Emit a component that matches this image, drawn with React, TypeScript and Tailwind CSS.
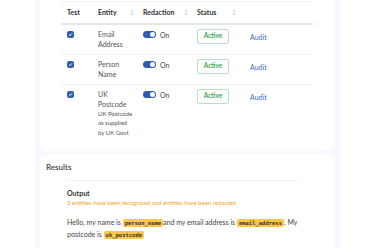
const rows = [
  { entity: ['Email', 'Address'], note: null },
  { entity: ['Person', 'Name'], note: null },
  { entity: ['UK', 'Postcode'], note: ['UK Postcode', 'as supplied', 'by UK Govt'] },
]

function SortIcon() {
  return (
    <svg width="4" height="7" viewBox="0 0 4 7" className="shrink-0">
      <path d="M2 0.5 L3.6 2.8 H0.4 Z" fill="#cfd3d8" />
      <path d="M2 6.5 L3.6 4.2 H0.4 Z" fill="#cfd3d8" />
    </svg>
  )
}

function Checkbox() {
  return (
    <div className="w-[7px] h-[7px] rounded-[2px] bg-[#2f5fae] flex items-center justify-center">
      <svg width="5" height="5" viewBox="0 0 5 5">
        <path d="M1 2.6 L2.1 3.6 L4 1.4" stroke="white" strokeWidth="0.9" fill="none" />
      </svg>
    </div>
  )
}

function Toggle() {
  return (
    <div className="flex items-center gap-[4px]">
      <div className="w-[13px] h-[7px] rounded-full bg-[#2d5cb0] flex items-center justify-end pr-[1px]">
        <div className="w-[5px] h-[5px] rounded-full bg-white" />
      </div>
      <span className="text-[7px] leading-[10px] text-[#444]">On</span>
    </div>
  )
}

function Tag({ children }: { children: string }) {
  return (
    <span className="inline-block align-middle bg-[#fcc647] rounded-[2px] px-[2px] leading-[8px] text-[5.5px] font-bold text-[#333] font-['DejaVu_Sans_Mono',monospace]">
      {children}
    </span>
  )
}

export default function App() {
  return (
    <div className="w-[375px] h-[248px] overflow-hidden bg-white flex font-['Lato',sans-serif]">
      <div className="w-[35px] shrink-0" />
      <div className="w-[305px] shrink-0 bg-[#f6f9fd] pl-[5px] pr-[6px] flex flex-col gap-[4px]">
        <div className="bg-white rounded-b-[5px] -mt-[8px] pt-[9px] px-[21px] h-[159px] shrink-0">
          <table className="w-[252px] table-fixed border-collapse text-[#444] leading-none">
            <colgroup>
              <col className="w-[31px]" />
              <col className="w-[45px]" />
              <col className="w-[54px]" />
              <col className="w-[49px]" />
              <col className="w-[73px]" />
            </colgroup>
            <thead>
              <tr className="border-t border-[#eef0f3] border-b-2 border-b-[#e3e7ec]">
                <th className="h-[22px] pl-[6px] text-left text-[7px] font-bold text-[#333]">Test</th>
                <th className="pl-[6px] text-left text-[7px] font-bold text-[#333]">
                  <div className="flex items-center justify-between pr-[3px]">
                    Entity <SortIcon />
                  </div>
                </th>
                <th className="pl-[6px] text-left text-[7px] font-bold text-[#333]">
                  <div className="flex items-center justify-between pr-[3px]">
                    Redaction <SortIcon />
                  </div>
                </th>
                <th className="pl-[6px] text-left text-[7px] font-bold text-[#333]">
                  <div className="flex items-center justify-between pr-[4px]">
                    Status <SortIcon />
                  </div>
                </th>
                <th />
              </tr>
            </thead>
            <tbody>
              {rows.map((r, i) => (
                <tr key={i} className={i < rows.length - 1 ? 'border-b border-[#eef0f3] align-top' : 'align-top'}>
                  <td className="pl-[6px] pt-[6px]">
                    <Checkbox />
                  </td>
                  <td className="pl-[6px] pt-[4px] pb-[5px]">
                    <div className="text-[7px] leading-[10px] text-[#555]">
                      {r.entity[0]}
                      <br />
                      {r.entity[1]}
                    </div>
                    {r.note && (
                      <div className="text-[6px] leading-[9.5px] text-[#555]">
                        {r.note.map((n) => (
                          <div key={n}>{n}</div>
                        ))}
                      </div>
                    )}
                  </td>
                  <td className="pl-[6px] pt-[5px]">
                    <Toggle />
                  </td>
                  <td className="pl-[6px] pt-[4px]">
                    <div className="w-[32px] h-[15px] border border-[#b6e2c1] rounded-[2px] flex items-center justify-center text-[6.5px] font-bold text-[#3aa655]">
                      Active
                    </div>
                  </td>
                  <td className="pl-[10px] pt-[7px]">
                    <div className="text-[7px] leading-[10px] text-[#3d6cc0]">Audit</div>
                  </td>
                </tr>
              ))}
            </tbody>
          </table>
        </div>
        <div className="bg-white rounded-t-[5px] flex-1 pt-[6px] pl-[6px] pr-[36px]">
          <div className="text-[8px] leading-[12px] font-semibold text-[#444]">Results</div>
          <div className="ml-[20px] mt-[7px] border-t border-[#eef0f3] pt-[8px] pl-[1px]">
            <div className="text-[7px] leading-[9px] font-bold text-[#333]">Output</div>
            <div className="text-[6px] leading-[10px] text-[#f5a623]">
              3 entities have been recognised and entities have been redacted
            </div>
            <div className="mt-[8px] text-[7px] leading-[12px] text-[#444]">
              Hello, my name is <Tag>person_name</Tag>and my email address is <Tag>email_address</Tag>. My postcode is <Tag>uk_postcode</Tag>
            </div>
          </div>
        </div>
      </div>
    </div>
  )
}
